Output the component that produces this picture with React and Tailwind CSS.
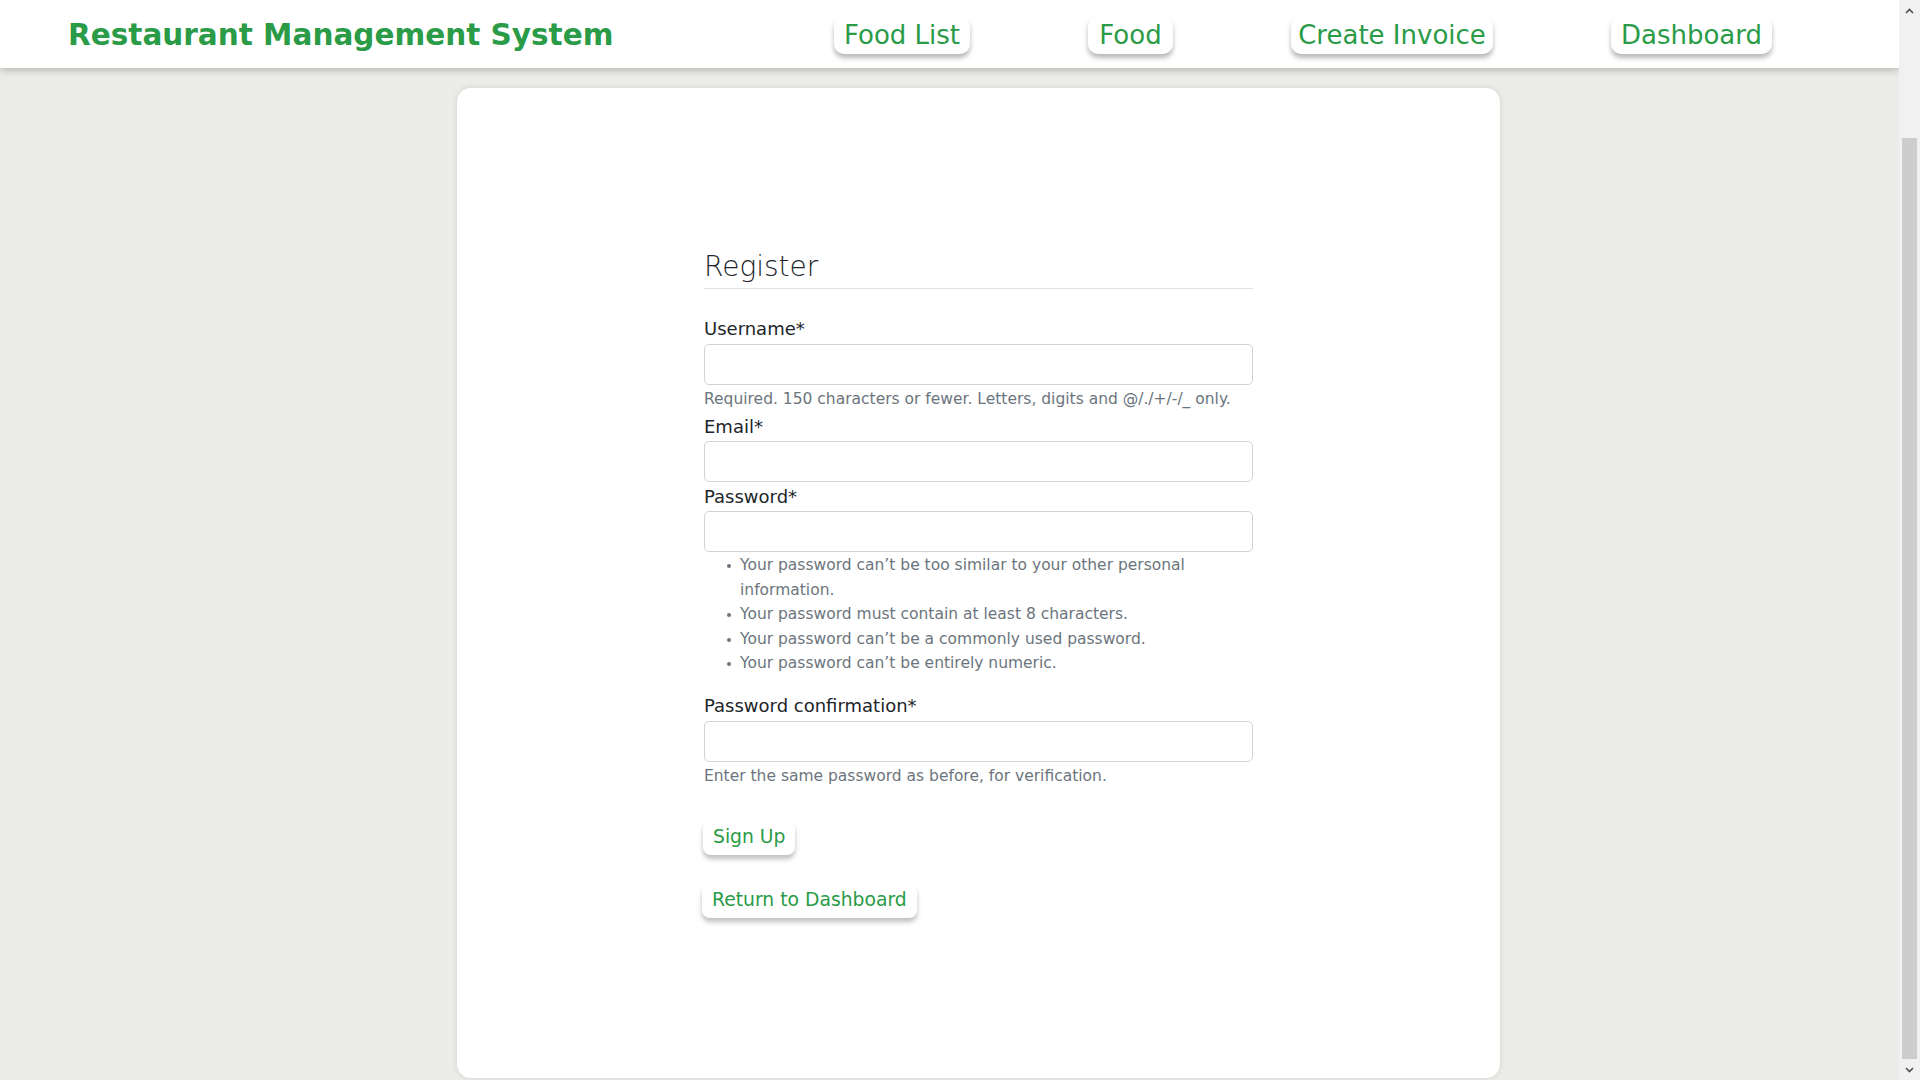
import React from 'react';

const links = [
  { label: 'Food List', w: 'w-[136px]' },
  { label: 'Food', w: 'w-[85px]' },
  { label: 'Create Invoice', w: 'w-[202px]' },
  { label: 'Dashboard', w: 'w-[161px]' },
];

const pwRules = [
  'Your password can’t be too similar to your other personal information.',
  'Your password must contain at least 8 characters.',
  'Your password can’t be a commonly used password.',
  'Your password can’t be entirely numeric.',
];

const Label = ({ children, className = '' }) => (
  <label className={`block text-[18px] leading-[24px] text-[#212529] ${className}`}>{children}</label>
);

const Input = ({ type = 'text', className = '' }) => (
  <input
    type={type}
    className={`block w-full h-[41px] bg-white border border-[#ced4da] rounded-[5px] px-3 text-[18px] outline-none ${className}`}
  />
);

const Help = ({ children, className = '' }) => (
  <p className={`text-[15.5px] leading-[24px] text-[#6c757d] ${className}`}>{children}</p>
);

// window scrollbar as it appears in the screenshot
const Scrollbar = () => (
  <div className="w-[21px] h-full bg-[#f1f1f1] flex flex-col items-center shrink-0">
    <div className="h-[21px] w-full flex items-center justify-center">
      <svg width="9" height="6" viewBox="0 0 9 6">
        <polyline points="1,5 4.5,1.5 8,5" fill="none" stroke="#505050" strokeWidth="1.6" />
      </svg>
    </div>
    <div className="h-[117px]" />
    <div className="w-[15px] flex-1 bg-[#cdcdcd]" />
    <div className="h-[21px] w-full flex items-center justify-center">
      <svg width="9" height="6" viewBox="0 0 9 6">
        <polyline points="1,1 4.5,4.5 8,1" fill="none" stroke="#505050" strokeWidth="1.6" />
      </svg>
    </div>
  </div>
);

export default function App() {
  return (
    <div className="h-screen flex overflow-hidden bg-[#ececE8] font-['DejaVu_Sans',sans-serif]">
      <div className="flex-1 min-w-0 overflow-hidden">
        <header className="h-[68px] bg-white shadow-[0_2px_8px_rgba(0,0,0,0.25)] flex items-center relative z-10">
          <h1 className="ml-[68px] mt-[3px] text-[29.5px] font-bold text-[#2a9b47] leading-none">
            Restaurant Management System
          </h1>
          <nav className="ml-auto mr-[127px] flex items-center gap-[118px] mt-[2px]">
            {links.map((l) => (
              <a
                key={l.label}
                href="#"
                className={`${l.w} h-[38px] flex items-center justify-center bg-white rounded-[10px] shadow-[0_4px_5px_rgba(0,0,0,0.28)] text-[26px] leading-[32px] text-[#2a9b47]`}
              >
                {l.label}
              </a>
            ))}
          </nav>
        </header>

        <main className="ml-[457px] mt-[20px] w-[1043px] h-[990px] bg-white rounded-[14px] shadow-[0_0_6px_rgba(0,0,0,0.12)] pt-[162px]">
          <form className="w-[549px] mx-auto" onSubmit={(e) => e.preventDefault()}>
            <h2 className="text-[28px] leading-[34px] font-extralight text-[#212529] pb-[4px] border-b border-[#dee2e6]">
              Register
            </h2>

            <Label className="mt-[28px]">Username*</Label>
            <Input className="mt-[3px]" />
            <Help className="mt-[2px]">Required. 150 characters or fewer. Letters, digits and @/./+/-/_ only.</Help>

            <Label className="mt-[4px]">Email*</Label>
            <Input type="email" className="mt-[2px]" />

            <Label className="mt-[3px]">Password*</Label>
            <Input type="password" className="mt-[2px]" />
            <ul className="text-[15.5px] leading-[24.5px] text-[#6c757d] mt-[1px]">
              {pwRules.map((r) => (
                <li key={r} className="flex">
                  <span className="w-[4px] h-[4px] rounded-full bg-[#6c757d] mt-[11px] ml-[23px] mr-[9px] shrink-0" />
                  <span>{r}</span>
                </li>
              ))}
            </ul>

            <Label className="mt-[18px]">Password confirmation*</Label>
            <Input type="password" className="mt-[3px]" />
            <Help className="mt-[2px]">Enter the same password as before, for verification.</Help>

            <button
              type="submit"
              className="mt-[33px] -ml-px h-[34px] px-[10px] bg-white rounded-[8px] shadow-[0_4px_5px_rgba(0,0,0,0.25)] text-[18.75px] text-[#2a9b47] block"
            >
              Sign Up
            </button>
            <button
              type="button"
              className="mt-[29px] -ml-[2px] h-[34px] px-[10px] bg-white rounded-[8px] shadow-[0_4px_5px_rgba(0,0,0,0.25)] text-[18.75px] text-[#2a9b47] block"
            >
              Return to Dashboard
            </button>
          </form>
        </main>
      </div>
      <Scrollbar />
    </div>
  );
}
